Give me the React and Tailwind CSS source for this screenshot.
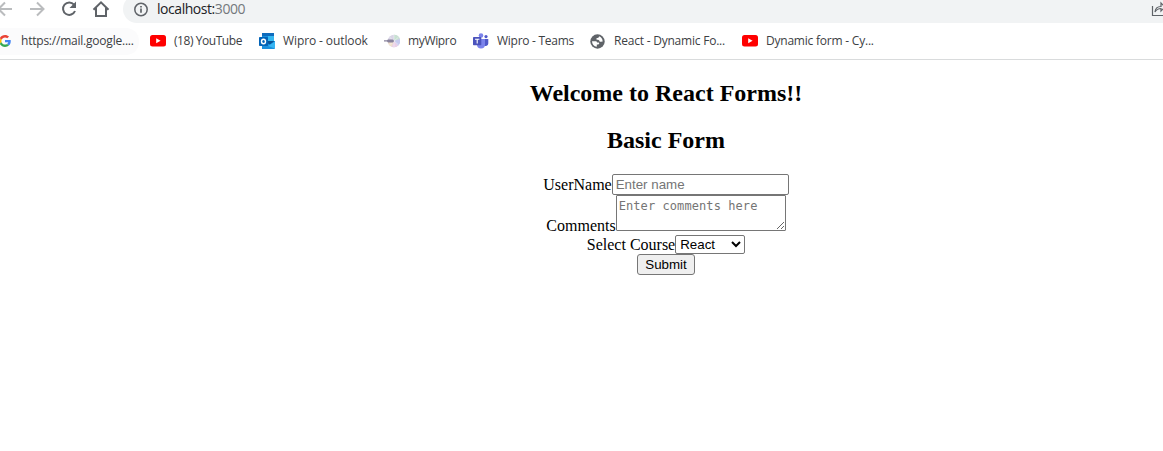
import React from "react";

const YouTube = () => (
  <svg width="16" height="12" viewBox="0 0 16 12" className="block shrink-0">
    <rect width="16" height="11.5" rx="2.5" fill="#f00" />
    <path d="M6.2 3.3 10.6 5.8 6.2 8.2Z" fill="#fff" />
  </svg>
);

const Google = () => (
  <svg width="12" height="12" viewBox="0 0 48 48" className="block shrink-0">
    <path fill="#EA4335" d="M24 9.5c3.54 0 6.71 1.22 9.21 3.6l6.85-6.85C35.9 2.38 30.47 0 24 0 14.62 0 6.51 5.38 2.56 13.22l7.98 6.19C12.43 13.72 17.74 9.5 24 9.5z" />
    <path fill="#4285F4" d="M46.98 24.55c0-1.57-.15-3.09-.38-4.55H24v9.02h12.94c-.58 2.96-2.26 5.48-4.78 7.18l7.73 6c4.51-4.18 7.09-10.36 7.09-17.65z" />
    <path fill="#FBBC05" d="M10.53 28.59c-.48-1.45-.76-2.99-.76-4.59s.27-3.14.76-4.59l-7.98-6.19C.92 16.46 0 20.12 0 24c0 3.88.92 7.54 2.56 10.78l7.97-6.19z" />
    <path fill="#34A853" d="M24 48c6.48 0 11.93-2.13 15.89-5.81l-7.73-6c-2.15 1.45-4.92 2.3-8.16 2.3-6.26 0-11.57-4.22-13.47-9.91l-7.98 6.19C6.51 42.62 14.62 48 24 48z" />
  </svg>
);

const Outlook = () => (
  <svg width="16" height="16" viewBox="0 0 16 16" className="block shrink-0">
    <path d="M3 1h12v8H3z" fill="#1490df" />
    <path d="M3 0h12v3H3z" fill="#0f6cbd" />
    <path d="M9 3h6v5H9z" fill="#35b8f1" />
    <path d="M3 8h13v7a1 1 0 0 1-1 1H3z" fill="#1a8fdc" />
    <path d="M9 8h6.5L11 11.5 9 10.5z" fill="#0a5295" />
    <path d="M9 13 16 8.5V15.5z" fill="#36b5f3" />
    <rect y="4" width="9" height="9" rx=".8" fill="#0364b8" />
    <ellipse cx="4.5" cy="8.5" rx="2" ry="2.2" fill="none" stroke="#fff" strokeWidth="1.4" />
  </svg>
);

const MyWipro = () => (
  <svg width="16" height="14" viewBox="0 0 16 14" className="block shrink-0">
    <circle cx="10" cy="7" r="6.2" fill="#d9d5e6" />
    <path d="M10 7V.8A6.2 6.2 0 0 1 15.8 5z" fill="#c8e0d2" />
    <path d="M10 7l5.8-2a6.2 6.2 0 0 1-1.8 6.7z" fill="#c6cbef" />
    <path d="M10 7l4 4.7a6.2 6.2 0 0 1-6.400 1.100z" fill="#ead0e8" />
    <path d="M10 7 7.600 12.800A6.200 6.200 0 0 1 3.800 7z" fill="#f1e0cc" />
    <path d="M10 .8v12.400M5.500 3.200l9 7.600M5.600 10.700l8.800-7.400" stroke="#fff" strokeWidth=".4" />
    <path d="M0 6.200h3l1-.6h5l1.200 1.400L9 8.400H4L3 7.400H0z" fill="#88829c" />
  </svg>
);

const Teams = () => (
  <svg width="16" height="16" viewBox="0 0 16 16" className="block shrink-0">
    <circle cx="13" cy="3.6" r="1.6" fill="#5059c9" />
    <path d="M10 6h5.3v4.5a2.8 2.8 0 0 1-4.5 2z" fill="#5059c9" />
    <circle cx="8" cy="2.5" r="2.3" fill="#7b83eb" />
    <path d="M4 6h8v5.5a4 4 0 0 1-8 0z" fill="#7b83eb" />
    <rect y="4" width="8.3" height="8.3" rx=".7" fill="#4b53bc" />
    <path d="M2 6.2h4.4M4.2 6.2v4.4" stroke="#fff" strokeWidth="1.1" />
  </svg>
);

const Globe = () => (
  <svg width="15" height="15" viewBox="0 0 15 15" className="block shrink-0">
    <circle cx="7.5" cy="7.5" r="7.2" fill="#5f6368" />
    <path d="M2 7.300H5.200c1.400 0 1.700.5 1.800 1.300h1.200c.8 0 1 .4 1 1s-.5.9-1.200.9H6.800v2.300C4 12.400 2 10.200 2 7.300Z" fill="#fff" />
    <path d="M9 2.300c0 1.100-.5 1.500-1.400 1.600-.8 0-1.300.4-1.200 1 .1.700.7.800 1.600.8.900.1 1.300.5 1.400 1.300.1.700.8.900 1.500.8l1.800-.2C12.700 5 11.200 3.100 9 2.300Z" fill="#fff" />
  </svg>
);

const Bookmark = ({ icon, className, children }) => (
  <div className={"flex h-4 shrink-0 items-center whitespace-nowrap " + className}>
    {icon}
    <span>{children}</span>
  </div>
);

export default function App() {
  return (
    <div className="h-[451px] w-full overflow-hidden bg-white">
      <header className="h-[60px] overflow-hidden border-b border-[#d9dbdc] font-['Open_Sans',sans-serif] text-[#3c4043]">
        <div className="flex h-[23px]">
          <svg width="123" height="23" viewBox="0 0 123 23" fill="none" className="block shrink-0">
            <path d="M12 9H-1M5 2.5-1.5 9 5 15.5" stroke="#babcbe" strokeWidth="2" />
            <path d="M30 9h13M37 2.5 43.500 9 37 15.500" stroke="#babcbe" strokeWidth="2" />
            <path d="M74 4.700A6.200 6.200 0 1 0 75 11" stroke="#5f6368" strokeWidth="2" />
            <path d="M76 1.500V8h-6.500z" fill="#5f6368" />
            <path d="M93.500 9.800 101 2.300 108.500 9.800M96 8v8h10V8" stroke="#5f6368" strokeWidth="2" />
          </svg>
          <div className="-mt-[5px] flex h-7 grow items-center rounded-l-[14px] bg-[#f1f3f4] pl-[11px]">
            <svg width="15" height="15" viewBox="0 0 15 15" className="block shrink-0">
              <circle cx="7" cy="7.5" r="6.2" fill="none" stroke="#5f6368" strokeWidth="1.5" />
              <path d="M7 6.600v4.200M7 4v1.500" stroke="#5f6368" strokeWidth="1.700" />
            </svg>
            <div className="ml-2 text-[14px] leading-5 tracking-[-0.450px] text-[#202124]">
              localhost:<span className="text-[#74787c]">3000</span>
            </div>
            <svg width="12" height="28" viewBox="0 0 12 28" fill="none" className="ml-auto block shrink-0">
              <path d="M1.500 11v9.500H12" stroke="#5f6368" strokeWidth="1.200" />
              <path d="M4 17c.3-3.500 2.500-5.500 6-5.500V8l4 4-4 4v-2.500c-3 0-4.500 1-6 3.500Z" stroke="#5f6368" strokeWidth="1.200" />
            </svg>
          </div>
        </div>
        <nav className="flex h-9 items-center text-[12px]">
          <div className="flex h-[27px] w-[139px] shrink-0 items-center rounded-r-[13px] bg-[#fbfbfc]">
            <Bookmark icon={<Google />} className="-ml-px gap-[10px] tracking-[-0.220px]">https://mail.google....</Bookmark>
          </div>
          <Bookmark icon={<YouTube />} className="ml-[11px] w-[109px] gap-2 tracking-[-0.440px]">(18) YouTube</Bookmark>
          <Bookmark icon={<Outlook />} className="w-[125px] gap-2 tracking-[-0.100px]">Wipro - outlook</Bookmark>
          <Bookmark icon={<MyWipro />} className="w-[89px] gap-2 tracking-[-0.350px]">myWipro</Bookmark>
          <Bookmark icon={<Teams />} className="w-[117px] gap-2 tracking-[-0.270px]">Wipro - Teams</Bookmark>
          <Bookmark icon={<Globe />} className="w-[152px] gap-[9px] tracking-[-0.220px]">React - Dynamic Fo...</Bookmark>
          <Bookmark icon={<YouTube />} className="gap-2 tracking-[-0.220px]">Dynamic form - Cy...</Bookmark>
        </nav>
      </header>
      <main className="w-[1332px] pt-5 text-center font-['Liberation_Serif',serif] text-[16px] leading-[18px] text-black">
        <h2 className="text-[24px] leading-[27px] font-bold">Welcome to React Forms!!</h2>
        <h2 className="mt-5 text-[24px] leading-[27px] font-bold">Basic Form</h2>
        <form className="mt-5 flex flex-col items-center">
          <label className="flex h-[21px] items-center">
            UserName
            <input placeholder="Enter name" className="h-[21px] w-[177px] rounded-[2px] border border-[#767676] bg-white px-[3px] font-['Liberation_Sans',sans-serif] text-[13.333px] leading-normal placeholder:text-[#757575]" />
          </label>
          <label className="flex h-10 items-start">
            <span className="mt-[22px]">Comments</span>
            <textarea placeholder="Enter comments here" className="h-9 w-[170px] resize rounded-[1px] border border-[#767676] bg-white px-[2px] py-[3px] font-['DejaVu_Sans_Mono',monospace] text-[12px] leading-[15px] tracking-[0.080px] placeholder:text-[#757575]" />
          </label>
          <label className="flex h-[19px] items-center">
            Select Course
            <select className="h-[19px] w-[70px] rounded-[2px] border border-[#767676] bg-white font-['Liberation_Sans',sans-serif] text-[13.333px] leading-normal">
              <option>React</option>
              <option>Angular</option>
              <option>Vue</option>
            </select>
          </label>
          <button type="button" className="h-[21px] w-[58px] rounded-[3px] border border-[#767676] bg-[#efefef] font-['Liberation_Sans',sans-serif] text-[13.333px] leading-none">Submit</button>
        </form>
      </main>
    </div>
  );
}
